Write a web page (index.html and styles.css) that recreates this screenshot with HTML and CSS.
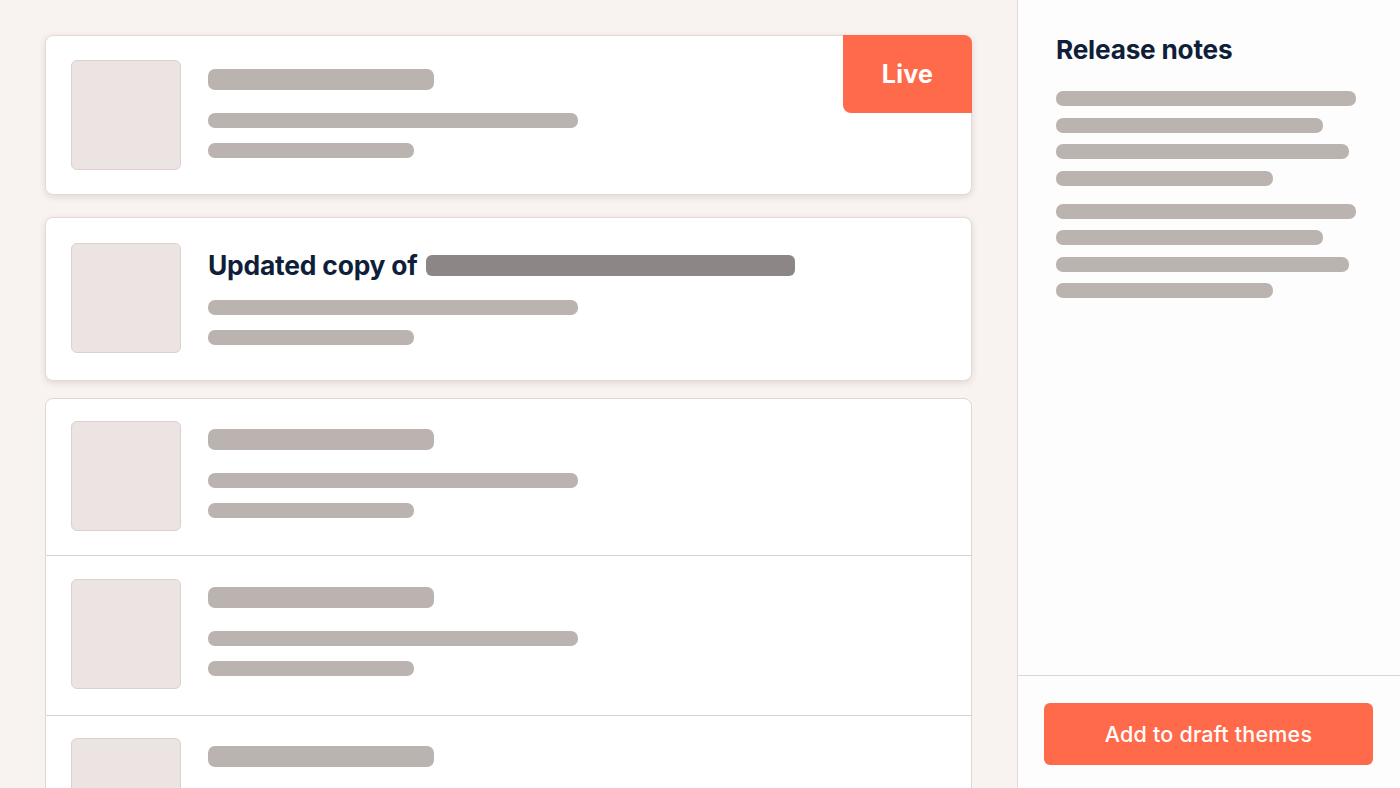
FILE: index.html
```html
<!DOCTYPE html>
<html lang="en">
<head>
<meta charset="utf-8">
<title>Themes</title>
<link rel="stylesheet" href="styles.css">
</head>
<body>
<div class="app">
  <main class="main">
    <section class="card card-live">
      <div class="thumb"></div>
      <div class="lines">
        <div class="bar bar-title"></div>
        <div class="bar bar-long"></div>
        <div class="bar bar-short"></div>
      </div>
      <div class="badge">Live</div>
    </section>

    <section class="card card-copy">
      <div class="thumb"></div>
      <div class="lines">
        <div class="title-row">
          <span class="title">Updated copy of</span>
          <span class="bar bar-dark"></span>
        </div>
        <div class="bar bar-long"></div>
        <div class="bar bar-short"></div>
      </div>
    </section>

    <section class="list">
      <div class="row">
        <div class="thumb"></div>
        <div class="lines">
          <div class="bar bar-title"></div>
          <div class="bar bar-long"></div>
          <div class="bar bar-short"></div>
        </div>
      </div>
      <div class="row">
        <div class="thumb"></div>
        <div class="lines">
          <div class="bar bar-title"></div>
          <div class="bar bar-long"></div>
          <div class="bar bar-short"></div>
        </div>
      </div>
      <div class="row">
        <div class="thumb"></div>
        <div class="lines">
          <div class="bar bar-title"></div>
          <div class="bar bar-long"></div>
          <div class="bar bar-short"></div>
        </div>
      </div>
    </section>
  </main>

  <aside class="sidebar">
    <div class="notes">
      <h2 class="notes-title">Release notes</h2>
      <div class="para">
        <div class="nbar w300"></div>
        <div class="nbar w267"></div>
        <div class="nbar w293"></div>
        <div class="nbar w217"></div>
      </div>
      <div class="para">
        <div class="nbar w300"></div>
        <div class="nbar w267"></div>
        <div class="nbar w293"></div>
        <div class="nbar w217"></div>
      </div>
    </div>
    <div class="footer">
      <button class="btn">Add to draft themes</button>
    </div>
  </aside>
</div>
</body>
</html>
```

FILE: styles.css
```css
* { box-sizing: border-box; }

html, body {
  margin: 0;
  padding: 0;
  height: 100%;
}

body {
  background: #f8f2f0;
  font-family: Inter, "Noto Sans", "Liberation Sans", sans-serif;
  color: #0f1f3a;
  overflow: hidden;
}

.app {
  display: flex;
  height: 788px;
  overflow: hidden;
}

.main {
  width: 1017px;
  flex: none;
  padding: 35px 45px 0 45px;
  display: flex;
  flex-direction: column;
  overflow: hidden;
}

.card {
  position: relative;
  flex: none;
  background: #ffffff;
  border: 1px solid #e4dad7;
  border-radius: 8px;
  box-shadow: 0 2px 6px rgba(110, 80, 70, 0.16);
  display: flex;
  gap: 27px;
  padding: 24px 25px;
}

.card-live {
  height: 160px;
}

.card-copy {
  height: 164px;
  margin-top: 22px;
  padding-top: 25px;
}

.thumb {
  width: 110px;
  height: 110px;
  flex: none;
  background: #ebe4e2;
  border: 1px solid #dcd1ce;
  border-radius: 6px;
}

.lines {
  display: flex;
  flex-direction: column;
  align-items: flex-start;
  padding-top: 9px;
}

.bar {
  display: block;
  background: #bab3b0;
  border-radius: 7px;
}

.bar-title {
  width: 226px;
  height: 21px;
}

.bar-long {
  width: 370px;
  height: 15px;
  margin-top: 23px;
}

.bar-short {
  width: 206px;
  height: 15px;
  margin-top: 15px;
}

.card-copy .lines {
  padding-top: 7px;
}

.title-row {
  display: flex;
  align-items: center;
  gap: 8px;
  height: 30px;
}

.title {
  font-size: 26.4px;
  font-weight: 700;
  letter-spacing: -0.2px;
  color: #0f1f3a;
  line-height: 30px;
}

.bar-dark {
  width: 369px;
  height: 21px;
  background: #8c8786;
  border-radius: 6px;
}

.card-copy .bar-long {
  margin-top: 20px;
}

.badge {
  position: absolute;
  top: -1px;
  right: -1px;
  width: 129px;
  height: 78px;
  background: #ff6b4a;
  color: #ffffff;
  border-radius: 0 8px 0 8px;
  display: flex;
  align-items: center;
  justify-content: center;
  font-size: 25px;
  font-weight: 700;
  letter-spacing: 0.3px;
}

.list {
  flex: none;
  margin-top: 17px;
  background: #ffffff;
  border: 1px solid #e0d6d3;
  border-radius: 8px 8px 0 0;
}

.row {
  display: flex;
  gap: 27px;
  height: 157px;
  padding: 22px 25px;
  border-bottom: 1px solid #dcd4d2;
}

.row:nth-child(2) {
  height: 160px;
  padding-top: 23px;
}

.row .lines {
  padding-top: 8px;
}

.sidebar {
  flex: 1;
  background: #fefdfd;
  border-left: 1px solid #e3d9d6;
  display: flex;
  flex-direction: column;
}

.notes {
  flex: 1;
  padding: 33px 38px;
}

.notes-title {
  margin: 0 0 24px 0;
  font-size: 26.2px;
  line-height: 34px;
  font-weight: 700;
  letter-spacing: -0.2px;
  color: #0f1f3a;
}

.para {
  display: flex;
  flex-direction: column;
  gap: 11.5px;
}

.para + .para {
  margin-top: 18px;
}

.nbar {
  height: 15px;
  background: #bab3b0;
  border-radius: 7px;
}

.w300 { width: 300px; }
.w267 { width: 267px; }
.w293 { width: 293px; }
.w217 { width: 217px; }

.footer {
  height: 113px;
  flex: none;
  border-top: 1px solid #dcd5d3;
  padding: 27px 26px 0 26px;
}

.btn {
  width: 329px;
  height: 62px;
  border: none;
  border-radius: 6px;
  background: #ff6b4a;
  color: #ffffff;
  font-family: Inter, "Noto Sans", "Liberation Sans", sans-serif;
  font-size: 21.5px;
  font-weight: 500;
  letter-spacing: 0.2px;
  cursor: pointer;
}
```
